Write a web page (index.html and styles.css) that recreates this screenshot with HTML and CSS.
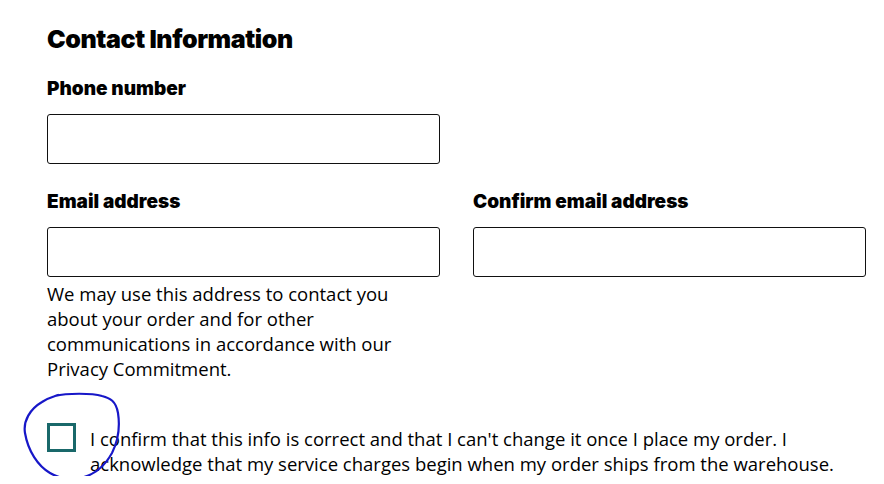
FILE: index.html
```html
<!DOCTYPE html>
<html lang="en">
<head>
<meta charset="utf-8">
<title>Contact Information</title>
<link rel="stylesheet" href="styles.css">
</head>
<body>
<main class="form">
  <h2 class="title">Contact Information</h2>
  <div class="row">
    <div class="field">
      <label class="label" for="phone">Phone number</label>
      <input class="input" id="phone" type="text">
    </div>
  </div>
  <div class="row two">
    <div class="field">
      <label class="label" for="email">Email address</label>
      <input class="input" id="email" type="text">
      <p class="help">We may use this address to contact you about your order and for other communications in accordance with our Privacy Commitment.</p>
    </div>
    <div class="field">
      <label class="label" for="email2">Confirm email address</label>
      <input class="input" id="email2" type="text">
    </div>
  </div>
  <div class="confirm">
    <span class="box"></span>
    <p class="confirm-text">I confirm that this info is correct and that I can't change it once I place my order. I acknowledge that my service charges begin when my order ships from the warehouse.</p>
    <svg class="scribble" width="100" height="92" viewBox="0 0 100 92" fill="none">
      <path d="M33 5 C45 2 70 2 80 5 C88 7 94 10 96 22 C98 35 96 50 90 62 C84 73 76 82 62 86 C50 89 38 88 28 82 C16 75 6 60 3 42 C1 30 8 18 20 11 C26 7 30 6 36 4" stroke="#1717c8" stroke-width="2.2" stroke-linecap="round"/>
    </svg>
  </div>
</main>
</body>
</html>
```
FILE: styles.css
```css
html, body { margin: 0; padding: 0; background: #fff; }
body { font-family: "Open Sans", "Liberation Sans", sans-serif; color: #000; }
.form { width: 819px; padding: 24px 0 0 47px; }
.title { margin: 0 0 23px; font-family: "Inter", "Liberation Sans", sans-serif; font-weight: 900; font-size: 25px; line-height: 30px; letter-spacing: -0.4px; }
.row { display: flex; gap: 33px; margin-bottom: 26px; }
.field { width: 393px; display: flex; flex-direction: column; }
.label { font-family: "Inter", "Liberation Sans", sans-serif; font-weight: 900; font-size: 19px; line-height: 24px; letter-spacing: 0; margin-bottom: 13px; }
.input { box-sizing: border-box; width: 393px; height: 50px; border: 1px solid #111; border-radius: 3px; margin: 0; padding: 0 12px; background: #fff; }
.help { margin: 4px 0 0; font-size: 18.5px; line-height: 25px; width: 385px; }
.row.two { margin-bottom: 42px; }
.confirm { position: relative; display: flex; gap: 14px; align-items: flex-start; }
.box { flex: none; box-sizing: border-box; width: 29px; height: 29px; border: 3px solid #19686a; }
.confirm-text { margin: 3px 0 0; font-size: 18.5px; line-height: 25px; width: 780px; }
.scribble { position: absolute; left: -25px; top: -32px; }
```
